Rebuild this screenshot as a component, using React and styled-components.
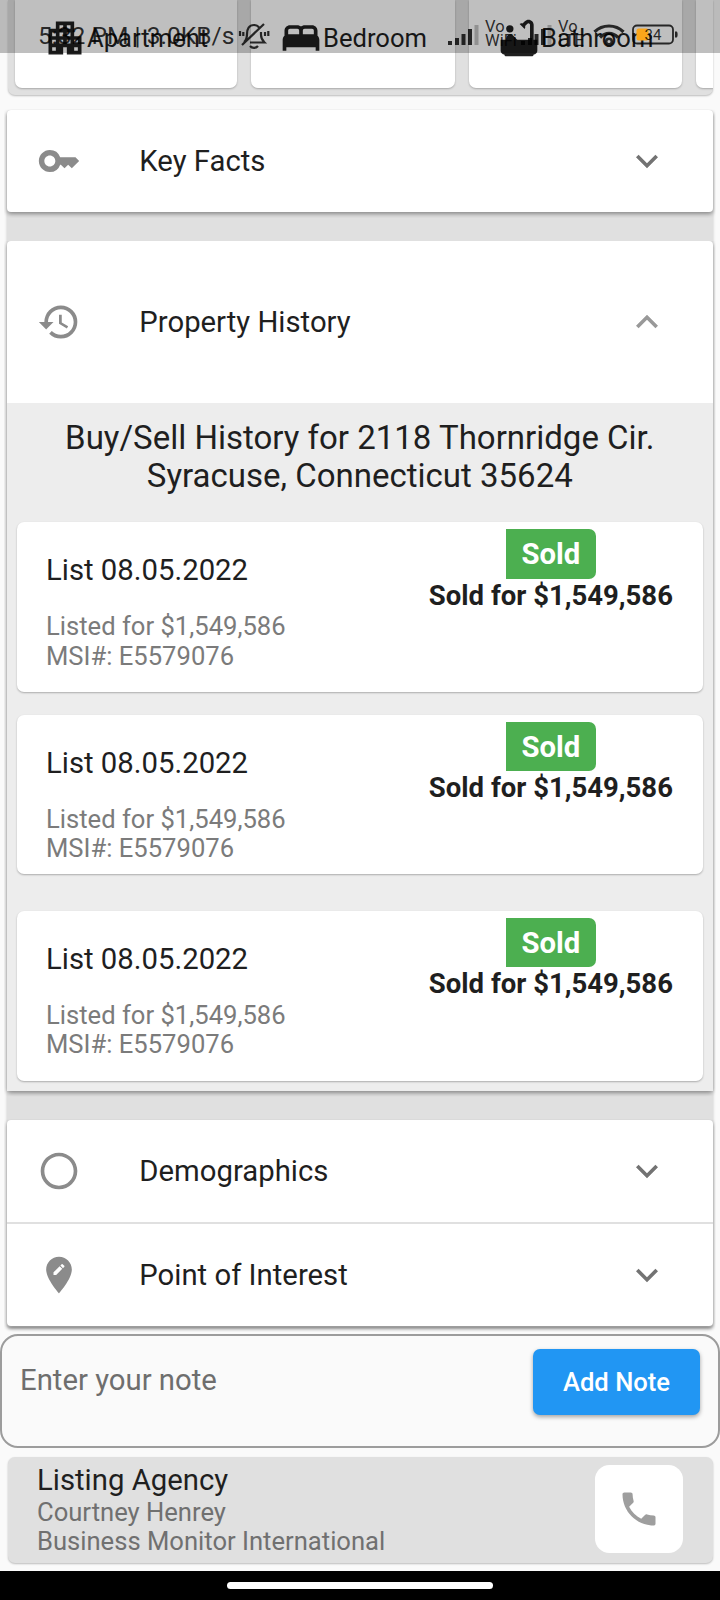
import React from "react";
import styled, { createGlobalStyle } from "styled-components";
import {
  MdApartment,
  MdBed,
  MdBathtub,
  MdKey,
  MdHistory,
  MdOutlineCircle,
  MdEditLocation,
  MdPhone,
  MdExpandMore,
  MdExpandLess,
} from "react-icons/md";

const GlobalStyle = createGlobalStyle`
  *, *::before, *::after { box-sizing: border-box; }
  body {
    margin: 0;
    background: #fafafa;
    color: #1f1f1f;
    font-family: Roboto, "Liberation Sans", sans-serif;
  }
  svg { display: block; flex: none; }
`;

const Screen = styled.main`
  position: relative;
  display: flex;
  flex-direction: column;
  width: 720px;
  height: 1600px;
  overflow: hidden;
`;

/* ---------- feature strip ---------- */

const FeatureStrip = styled.section`
  display: flex;
  flex: none;
  gap: 14px;
  height: 95px;
  margin: 0 7px 0 7.5px;
  padding: 0 0 7.5px 7.5px;
  overflow: hidden;
  background: #e0e0e0;
  border-radius: 0 0 7px 7px;
  box-shadow: 0 1px 2px rgba(0, 0, 0, 0.25);
`;

const FeatureCard = styled.div`
  display: flex;
  flex: none;
  align-items: flex-start;
  width: ${(p) => p.$width}px;
  padding: 16px 0 0 28px;
  background: #fff;
  border-radius: 0 0 7px 7px;
  box-shadow: 0 1px 2px rgba(0, 0, 0, 0.25);
  font-size: 25.6px;
  line-height: 44px;
  white-space: nowrap;
`;

/* ---------- status bar ---------- */

const StatusBar = styled.header`
  position: absolute;
  top: 0;
  left: 0;
  display: flex;
  align-items: flex-start;
  width: 720px;
  height: 53px;
  padding: 20px 41px 0 38px;
  background: rgba(0, 0, 0, 0.25);
  color: rgba(0, 0, 0, 0.8);

  svg { margin-top: 3px; }
`;

const Clock = styled.span`
  width: 200px;
  padding-top: 1px;
  font-size: 24.6px;
  line-height: 30px;
  white-space: nowrap;
`;

const StatusIcons = styled.div`
  display: flex;
  margin-left: auto;
`;

const CarrierLabel = styled.span`
  width: 35px;
  margin-left: 6px;
  font-size: 16.5px;
  line-height: 14px;
  font-weight: 400;
`;

/* ---------- panels ---------- */

const Panels = styled.section`
  display: flex;
  flex: none;
  flex-direction: column;
  gap: 29px;
  height: 1217px;
  margin: 14.5px 7.4px 0 7px;
  background: #e0e0e0;
  border-radius: 4px;
  box-shadow: 0 2px 3px rgba(0, 0, 0, 0.22);
`;

const Panel = styled.div`
  background: #fff;
  border-radius: 4px;
  box-shadow: 0 2px 4px rgba(0, 0, 0, 0.4);
  clip-path: inset(0 -3px -6px -3px);
`;

const PanelHeader = styled.div`
  display: flex;
  align-items: center;
  height: ${(p) => p.$height || 102.5}px;
  padding: 0 44px 0 29.8px;
  border-bottom: ${(p) => (p.$divided ? "2px solid #e0e0e0" : "0")};
  color: ${(p) => (p.$open ? "#999" : "#737373")};

  svg:first-child { color: #8b8b8b; }
`;

const PanelTitle = styled.h2`
  flex: 1;
  margin: 0 0 0 58.5px;
  color: #1f1f1f;
  font-size: 29.3px;
  font-weight: 400;
`;

const HistoryBody = styled.div`
  display: flex;
  flex-direction: column;
  height: 687.5px;
  padding: 15.5px 9.5px 0;
  background: #ededed;
`;

const HistoryTitle = styled.h3`
  margin: 0 0 26.5px;
  font-size: 33px;
  line-height: 38.5px;
  font-weight: 400;
  text-align: center;
`;

const SaleCard = styled.article`
  display: flex;
  flex: none;
  justify-content: space-between;
  height: ${(p) => p.$height}px;
  margin-bottom: ${(p) => p.$gap}px;
  padding: 7px 30.2px 0 29.5px;
  background: #fff;
  border-radius: 7px;
  box-shadow: 0 1px 2px rgba(0, 0, 0, 0.28);
`;

const Listing = styled.div`
  padding-top: 24px;
`;

const ListDate = styled.div`
  margin-bottom: 25px;
  font-size: 29.3px;
  line-height: 34px;
`;

const Muted = styled.div`
  color: ${(p) => p.$color || "#7b7b7b"};
  font-size: 25.6px;
  line-height: 29.6px;
`;

const Sale = styled.div`
  display: flex;
  flex-direction: column;
  align-items: center;
`;

const Badge = styled.span`
  width: 90px;
  height: 49.5px;
  background: #4caf50;
  border-radius: 0 7px 7px 0;
  color: #fff;
  font-size: 29.3px;
  line-height: 50px;
  font-weight: 700;
  text-align: center;
`;

const SalePrice = styled.strong`
  margin-top: 1px;
  font-size: 27.5px;
  line-height: 32px;
  font-weight: 700;
`;

/* ---------- note and agency ---------- */

const NoteBox = styled.section`
  display: flex;
  justify-content: space-between;
  flex: none;
  height: 113.5px;
  margin-top: 7.5px;
  padding: 13px 18px 0 18px;
  border: 2px solid #9c9c9c;
  border-radius: 18px;
`;

const NotePlaceholder = styled.span`
  padding-top: 14px;
  color: #6e6e6e;
  font-size: 29.3px;
  line-height: 34px;
`;

const AddButton = styled.button`
  width: 167px;
  height: 66px;
  padding: 0;
  border: 0;
  border-radius: 7px;
  background: #2196f3;
  box-shadow: 0 2px 4px rgba(0, 0, 0, 0.35);
  color: #fff;
  font-family: inherit;
  font-size: 25.6px;
  font-weight: 500;
`;

const Agency = styled.section`
  display: flex;
  flex: none;
  justify-content: space-between;
  height: 106px;
  margin: 9.5px 7px 0 7.5px;
  padding: 7.5px 30px 0 29.5px;
  background: #e0e0e0;
  border-radius: 7px;
  box-shadow: 0 1px 2px rgba(0, 0, 0, 0.25);
`;

const AgencyName = styled.div`
  margin-bottom: 3.3px;
  font-size: 29.3px;
  line-height: 30px;
`;

const CallButton = styled.div`
  display: grid;
  place-items: center;
  width: 88px;
  height: 88px;
  background: #fff;
  border-radius: 14.5px;
  color: #9e9e9e;
`;

const NavBar = styled.footer`
  display: flex;
  flex: none;
  justify-content: center;
  height: 29.5px;
  margin-top: auto;
  padding-top: 11.5px;
  background: #000;
`;

const HomePill = styled.div`
  width: 266px;
  height: 7px;
  background: #fff;
  border-radius: 4px;
`;

const MutedBell = () => (
  <svg width="32" height="28" viewBox="0 0 32 28" fill="none" stroke="currentColor" strokeWidth="2.200">
    <path d="M6 19c2.500-2 3-4 3-8 0-5 2-9 7-9 2 0 4 1 5 2.500M23 9v3c0 3.500 1 5 3.500 7.500H12M12 23c2 2.500 6 2.500 8 0M26 1L4 22M2 8v5M5.300 9v4M27 9v4M30.300 8v5" />
  </svg>
);

const Signal = () => (
  <svg width="32" height="22" viewBox="0 0 32 22" fill="currentColor">
    <path d="M1 18h4v4H1zM8 15h4v7H8zM14.500 11h4v11h-4zM21 6h4v16h-4z" />
    <path d="M27.500 2h4v20h-4z" opacity=".3" />
  </svg>
);

const Wifi = () => (
  <svg width="32" height="24" viewBox="0 0 32 24" fill="none" stroke="currentColor" strokeWidth="3.200">
    <path d="M1.500 9c8-8 21-8 29 0M7 14.500c5.500-5.500 12.500-5.500 18 0" />
    <circle cx="16" cy="18.500" r="2.800" strokeWidth="2.500" />
  </svg>
);

const Battery = () => (
  <svg width="54" height="22" viewBox="-7 -1 54 22">
    <rect x="1" y="1.500" width="40" height="18" rx="4" fill="none" stroke="currentColor" strokeWidth="1.800" />
    <rect x="4.500" y="4.500" width="12" height="12" rx="2" fill="#faa61a" />
    <path d="M43 7.500h1.500c1.500 0 1.500 6 0 6H43z" fill="currentColor" />
    <text x="12.500" y="16" fontSize="15" fill="currentColor" fontFamily="Roboto, sans-serif">34</text>
  </svg>
);

const sales = [
  { height: 170, gap: 22.5 },
  { height: 159, gap: 37 },
  { height: 170, gap: 0 },
];

const PanelRow = ({ icon: Icon, title, open, ...rest }) => (
  <PanelHeader $open={open} {...rest}>
    <Icon size={44} />
    <PanelTitle>{title}</PanelTitle>
    {open ? <MdExpandLess size={44} /> : <MdExpandMore size={44} />}
  </PanelHeader>
);

export default function App() {
  return (
    <>
      <GlobalStyle />
      <Screen>
        <FeatureStrip>
          <FeatureCard $width={222}>
            <MdApartment size={44} />
            Apartment
          </FeatureCard>
          <FeatureCard $width={204}>
            <MdBed size={44} />
            Bedroom
          </FeatureCard>
          <FeatureCard $width={213}>
            <MdBathtub size={44} />
            Bathroom
          </FeatureCard>
          <FeatureCard $width={60} />
        </FeatureStrip>

        <Panels>
          <Panel>
            <PanelRow icon={MdKey} title="Key Facts" />
          </Panel>
          <Panel>
            <PanelRow icon={MdHistory} title="Property History" open $height={162} />
            <HistoryBody>
              <HistoryTitle>
                Buy/Sell History for 2118 Thornridge Cir.
                <br />
                Syracuse, Connecticut 35624
              </HistoryTitle>
              {sales.map((s, i) => (
                <SaleCard key={i} $height={s.height} $gap={s.gap}>
                  <Listing>
                    <ListDate>List 08.05.2022</ListDate>
                    <Muted>Listed for $1,549,586</Muted>
                    <Muted>MSI#: E5579076</Muted>
                  </Listing>
                  <Sale>
                    <Badge>Sold</Badge>
                    <SalePrice>Sold for $1,549,586</SalePrice>
                  </Sale>
                </SaleCard>
              ))}
            </HistoryBody>
          </Panel>
          <Panel>
            <PanelRow icon={MdOutlineCircle} title="Demographics" $height={104} $divided />
            <PanelRow icon={MdEditLocation} title="Point of Interest" />
          </Panel>
        </Panels>

        <NoteBox>
          <NotePlaceholder>Enter your note</NotePlaceholder>
          <AddButton>Add Note</AddButton>
        </NoteBox>

        <Agency>
          <div>
            <AgencyName>Listing Agency</AgencyName>
            <Muted $color="#707070">Courtney Henrey</Muted>
            <Muted $color="#707070">Business Monitor International</Muted>
          </div>
          <CallButton>
            <MdPhone size={44} />
          </CallButton>
        </Agency>

        <NavBar>
          <HomePill />
        </NavBar>

        <StatusBar>
          <Clock>5:32 PM | 3.0KB/s</Clock>
          <MutedBell />
          <StatusIcons>
            <Signal />
            <CarrierLabel>Vo<br />WiFi</CarrierLabel>
            <Signal />
            <CarrierLabel>Vo<br />LTE</CarrierLabel>
            <Wifi />
            <Battery />
          </StatusIcons>
        </StatusBar>
      </Screen>
    </>
  );
}
